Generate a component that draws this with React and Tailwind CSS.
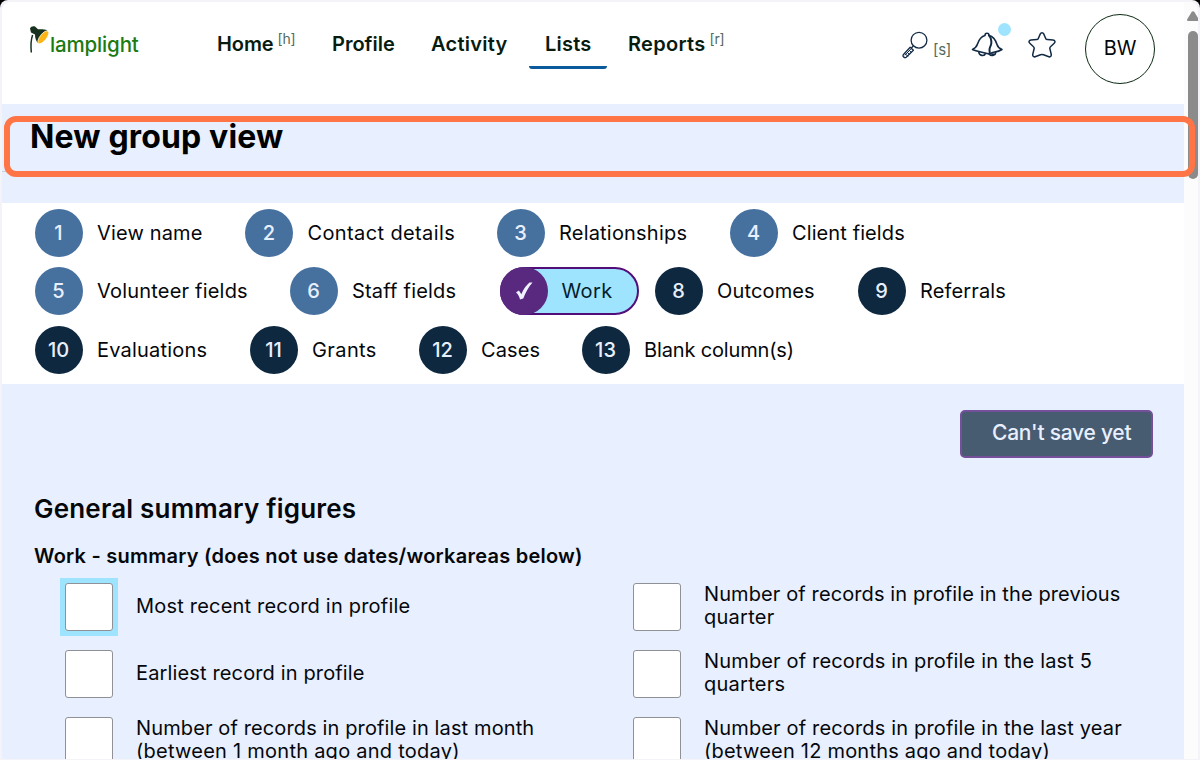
const cx = (...a) => a.filter(Boolean).join(" ");

function NavItem({ label, hint, active, className }) {
  return (
    <div className={cx("relative whitespace-nowrap text-[20px] leading-[30px] font-semibold text-[#071c0f]", className)}>
      {label}
      {hint && <span className="relative top-[-7px] ml-[4px] text-[14px] tracking-[-0.2px] font-normal text-[#536a5c]">{hint}</span>}
      {active && <div className="absolute top-[37px] -left-[16px] h-[3px] w-[78px] rounded-b-sm bg-[#0b5a9c]" />}
    </div>
  );
}

function Step({ n, label, tone, className, tracking }) {
  return (
    <div className={cx("flex h-12 shrink-0 items-center", className)}>
      <div className={cx("flex size-12 shrink-0 items-center justify-center rounded-full text-[20px] font-medium text-[#e8effd]", tone === "dark" ? "bg-[#0e2840]" : "bg-[#46719f]")}>{n}</div>
      <div className={cx("ml-[14.5px] whitespace-nowrap text-[20px]", tracking)}>{label}</div>
    </div>
  );
}

function CurrentStep({ label }) {
  return (
    <div className="mr-[16px] flex h-12 w-[139px] shrink-0 items-center rounded-full border-2 border-[#520d78] bg-[#9fe4ff]">
      <div className="-ml-[2px] flex size-12 shrink-0 items-center justify-center rounded-full bg-[#59287f]">
        <svg width="18" height="20" viewBox="0 0 18 20" fill="#eef2ff">
          <path d="M1 11.500 3.800 9.500C5 11 5.600 12 6.300 13.300 8.500 8 11.500 4 14.500 1.500L17.500 1.500C13.200 6.500 10.500 11.500 8.300 17.500L5 18.500C4.300 15.500 3 13 1 11.500Z" />
        </svg>
      </div>
      <div className="ml-[14px] text-[20px] tracking-[0.4px] text-[#05202c]">{label}</div>
    </div>
  );
}

function Option({ lines, focused }) {
  return (
    <div className="flex h-12 items-center">
      <div className={cx("shrink-0", focused && "-m-[5px] bg-[#9fe4ff] p-[5px]")}>
        <div className="size-12 rounded-[3px] border border-[#8f9196] bg-white" />
      </div>
      <div className={cx("-mt-[2px] ml-[23px] whitespace-nowrap text-[20px] leading-[23px]", focused && "pl-0")}>
        {lines.map(([text, tracking]) => <div key={text} className={tracking}>{text}</div>)}
      </div>
    </div>
  );
}

export default function App() {
  return (
    <div className="h-[760px] w-[1200px] overflow-hidden bg-black font-['Inter',sans-serif] text-[#05070a]">
      <div className="relative flex h-[760px] w-[1200px] overflow-hidden rounded-t-lg bg-[#f3f3f8] pt-[2px] pb-px pl-[2px]">
        <div className="flex w-[1182px] shrink-0 flex-col overflow-hidden rounded-tl-lg bg-[#e8effe]">
          <header className="flex h-[102px] shrink-0 items-start bg-white pl-[27px]">
            <div className="flex w-[188px] pt-[23px]">
              <svg width="21" height="30" viewBox="0 0 21 30" className="shrink-0">
                <path d="M3.600 10C1.800 15 1.600 20 2.300 27.500" fill="none" stroke="#17331f" strokeWidth="1.500" />
                <path d="M1 3.500C2 1.500 4 .8 6 1.600L9 4.300C12 4 15 4 18.500 5.300L8.800 18C7 16 6 13 6 9.500L2 7.500Z" fill="#17331f" />
                <ellipse cx="14.300" cy="12.300" rx="7.800" ry="3.300" transform="rotate(-52 14.300 12.300)" fill="#fbb615" stroke="#fff" strokeWidth="0.700" />
              </svg>
              <span className="mt-[5px] text-[20.5px] leading-[30px] font-medium tracking-[-0.15px] text-[#1c7a12]">lamplight</span>
            </div>
            <nav className="flex shrink-0 pt-[27px]">
              <NavItem label="Home" hint="[h]" className="w-[115px] tracking-[-0.1px]" />
              <NavItem label="Profile" className="w-[99px]" />
              <NavItem label="Activity" className="w-[114px] tracking-[0.25px]" />
              <NavItem label="Lists" active className="w-[83px] tracking-[0.2px]" />
              <NavItem label="Reports" hint="[r]" className="w-[273px] tracking-[0.3px]" />
            </nav>
            <svg width="28" height="28" viewBox="0 0 28 28" className="mt-[29px] shrink-0" fill="none" stroke="#142b45" strokeWidth="1.300" strokeLinejoin="round">
              <circle cx="18" cy="9.200" r="7.900" />
              <path d="m12.400 14.800-2.200 2.400M9.200 16.200l3.200 3.100-7.200 6.900c-.8.700-1.700.6-2.500-.2s-.9-1.700-.2-2.500Z" />
              <path d="m4 22.500 3 3M5.700 20.700l3 3M7.500 18.600l2.900 2.800M9.800 18 4 24.200" strokeWidth="1" />
            </svg>
            <span className="mt-[37px] ml-[4px] w-[37px] text-[15px] leading-[22px] tracking-[-0.3px] text-[#536a5c]">[s]</span>
            <div className="relative mt-[29px] ml-px h-[28px] w-[57px] shrink-0">
              <svg width="34" height="28" viewBox="0 0 34 28" fill="none" stroke="#142b45" strokeWidth="1.600" strokeLinecap="round" strokeLinejoin="round">
                <path d="M14 4.500C14 1.500 18 1.500 18 4.500C22.500 5.500 24.500 8.500 26 13.500C26.800 16.500 28.500 17.500 31 18.500C28 20.500 24 21 21.500 21.500L18.500 23C13 21.500 4 20 1.500 18.500C4 17.300 5.500 16 6.500 13C8 8.500 10 5.500 14 4.500Z" />
                <path d="M18 4.500C19.500 6 20.500 9.500 20.300 12.500C20 15 18.500 16 18.500 18.500C18.500 20.500 19 21.500 18.500 23" strokeWidth="2" />
                <path d="M7.800 21C8 25 13.500 25.500 14.500 22.500M18.500 23.500C20.500 25.500 24.500 24.500 25 20.800M21 23l2 .3" />
              </svg>
              <div className="absolute -top-[8px] left-[27px] size-[13px] rounded-full bg-[#9fe4ff]" />
            </div>
            <svg width="28" height="28" viewBox="0 0 28 28" className="mt-[29px] shrink-0" fill="none" stroke="#142b45" strokeWidth="1.500" strokeLinejoin="round">
              <path d="M12.300 2.900C13 1.300 15 1.300 15.700 2.900L17.700 7.500C18 8.300 18.500 8.600 19.300 8.600L25 9C27 9.200 27.600 11 26.200 12.300L22.500 15.700C21.800 16.300 21.700 17 21.900 17.800L23.200 23.200C23.600 25.300 22 26.500 20.200 25.500L15.500 23.700C14.500 23.300 13.500 23.300 12.500 23.700L7.800 25.500C6 26.500 4.400 25.300 4.800 23.200L6.100 17.800C6.300 17 6.200 16.300 5.500 15.700L1.800 12.300C.4 11 1 9.200 3 9L8.700 8.600C9.500 8.600 10 8.300 10.300 7.500Z" />
            </svg>
            <div className="mt-[12px] ml-[29px] flex size-[70px] shrink-0 items-center justify-center rounded-full border-[1.5px] border-[#0d2a14] pb-[2px] text-[20px] tracking-[-0.1px]">BW</div>
          </header>
          <div className="h-[99px] shrink-0 pt-[14px] pl-[28px]">
            <h1 className="text-[32px] leading-[38px] font-bold tracking-[0.15px] text-black">New group view</h1>
          </div>
          <section className="flex h-[181px] shrink-0 flex-col bg-white pt-[6px] pl-[32.5px]">
            <div className="flex">
              <Step n="1" label="View name" className="w-[210.500px]" tracking="tracking-[0.15px]" />
              <Step n="2" label="Contact details" className="w-[251.500px]" tracking="tracking-[0.38px] -ml-px" />
              <Step n="3" label="Relationships" className="w-[233px]" tracking="tracking-[0.2px]" />
              <Step n="4" label="Client fields" tracking="tracking-[0.1px]" />
            </div>
            <div className="mt-[10px] flex">
              <Step n="5" label="Volunteer fields" className="w-[255px]" tracking="tracking-[0.2px]" />
              <Step n="6" label="Staff fields" className="w-[210px]" tracking="tracking-[0.2px]" />
              <CurrentStep label="Work" />
              <Step n="8" label="Outcomes" tone="dark" className="w-[203px]" tracking="tracking-[0.15px]" />
              <Step n="9" label="Referrals" tone="dark" tracking="tracking-[0.15px]" />
            </div>
            <div className="mt-[11px] flex">
              <Step n="10" label="Evaluations" tone="dark" className="w-[215px]" tracking="tracking-[0.2px]" />
              <Step n="11" label="Grants" tone="dark" className="w-[169px]" tracking="tracking-[0.4px]" />
              <Step n="12" label="Cases" tone="dark" className="w-[163px]" tracking="tracking-[0.1px]" />
              <Step n="13" label="Blank column(s)" tone="dark" tracking="tracking-[-0.15px]" />
            </div>
          </section>
          <main className="flex flex-col pl-[32px]">
            <button className="mt-[26px] mr-[31px] flex h-12 w-[193px] items-center self-end rounded-[5px] border-2 border-[#75509a] bg-[#475b71] pb-[2px] pl-[30px] text-[21px] font-medium whitespace-nowrap text-[#e8effe]">
              <span className="tracking-[-0.25px]">Can't save yet</span>
            </button>
            <h2 className="mt-[34px] text-[26px] leading-[34px] font-semibold tracking-[0.2px]">General summary figures</h2>
            <h3 className="mt-[17px] text-[20px] leading-[26px] font-semibold tracking-[0.24px]">Work - summary (does not use dates/workareas below)</h3>
            <div className="mt-[14px] flex pl-[31px]">
              <div className="flex w-[568px] flex-col gap-[19px]">
                <Option focused lines={[["Most recent record in profile", "tracking-[0.2px]"]]} />
                <Option lines={[["Earliest record in profile", "tracking-[0.14px]"]]} />
                <Option lines={[["Number of records in profile in last month", "tracking-[0.12px]"], ["(between 1 month ago and today)", "tracking-[0.25px]"]]} />
              </div>
              <div className="flex flex-col gap-[19px]">
                <Option lines={[["Number of records in profile in the previous", "tracking-[0.11px]"], ["quarter", "tracking-[0.25px]"]]} />
                <Option lines={[["Number of records in profile in the last 5", "tracking-[0.16px]"], ["quarters", "tracking-[0.25px]"]]} />
                <Option lines={[["Number of records in profile in the last year", "tracking-[0.16px]"], ["(between 12 months ago and today)", "tracking-[0.22px]"]]} />
              </div>
            </div>
          </main>
        </div>
        <div className="flex w-[14px] shrink-0 flex-col items-end rounded-tr-lg bg-[#fcfcfc] pt-[9px]">
          <svg width="11" height="10" viewBox="0 0 11 10" className="shrink-0" fill="#8b8b8b">
            <path d="M0 8.500 4.500 1.200Q6 -.8 7.500 1.200L11 7V10H1Q0 10 0 8.500Z" />
          </svg>
          <div className="mt-[10px] h-[148px] w-[10px] rounded-[5px] bg-[#8b8b8b]" />
        </div>
        <div className="absolute top-[171px] left-[2px] h-px w-[4px] bg-[#c9d0dc]" />
        <div className="absolute top-[116px] left-[4px] h-[61px] w-[1191px] rounded-[12px] border-[6px] border-[#ff7545]" />
      </div>
    </div>
  );
}
